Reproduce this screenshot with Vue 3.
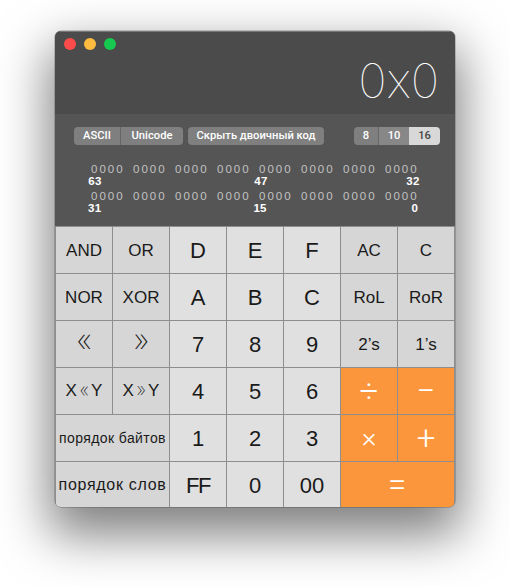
<script setup>
const keys = [
  { label: 'AND', kind: 'fn word' },
  { label: 'OR', kind: 'fn word' },
  { label: 'D', kind: 'digit' },
  { label: 'E', kind: 'digit' },
  { label: 'F', kind: 'digit' },
  { label: 'AC', kind: 'fn word' },
  { label: 'C', kind: 'fn word' },
  { label: 'NOR', kind: 'fn word' },
  { label: 'XOR', kind: 'fn word' },
  { label: 'A', kind: 'digit' },
  { label: 'B', kind: 'digit' },
  { label: 'C', kind: 'digit' },
  { label: 'RoL', kind: 'fn word' },
  { label: 'RoR', kind: 'fn word' },
  { label: '«', kind: 'fn shift' },
  { label: '»', kind: 'fn shift' },
  { label: '7', kind: 'digit' },
  { label: '8', kind: 'digit' },
  { label: '9', kind: 'digit' },
  { label: '2’s', kind: 'fn word' },
  { label: '1’s', kind: 'fn word' },
  { label: 'X', chev: '«', tail: 'Y', kind: 'fn word xy' },
  { label: 'X', chev: '»', tail: 'Y', kind: 'fn word xy' },
  { label: '4', kind: 'digit' },
  { label: '5', kind: 'digit' },
  { label: '6', kind: 'digit' },
  { label: '÷', kind: 'op' },
  { label: '−', kind: 'op' },
  { label: 'порядок байтов', kind: 'fn wide small' },
  { label: '1', kind: 'digit' },
  { label: '2', kind: 'digit' },
  { label: '3', kind: 'digit' },
  { label: '×', kind: 'op times' },
  { label: '+', kind: 'op' },
  { label: 'порядок слов', kind: 'fn wide' },
  { label: 'FF', kind: 'digit tight' },
  { label: '0', kind: 'digit' },
  { label: '00', kind: 'digit' },
  { label: '=', kind: 'op wide' }
]

const bitRows = [
  { left: '63', mid: '47', right: '32' },
  { left: '31', mid: '15', right: '0' }
]
</script>

<template>
  <div class="page">
    <div class="window">
      <div class="display">
        <div class="lights">
          <span class="light red"></span>
          <span class="light yellow"></span>
          <span class="light green"></span>
        </div>
        <div class="value">0x0</div>
      </div>

      <div class="panel">
        <div class="toolbar">
          <div class="seg">
            <span class="seg-item ascii">ASCII</span>
            <span class="seg-item unicode">Unicode</span>
          </div>
          <div class="seg">
            <span class="seg-item binary">Скрыть двоичный код</span>
          </div>
          <div class="seg base">
            <span class="seg-item b8">8</span>
            <span class="seg-item b10">10</span>
            <span class="seg-item b16 active">16</span>
          </div>
        </div>

        <div v-for="row in bitRows" :key="row.left" class="bit-row">
          <div class="bits">
            <span v-for="n in 8" :key="n" class="nibble">0000</span>
          </div>
          <div class="bit-labels">
            <span class="bit-left">{{ row.left }}</span>
            <span class="bit-mid">{{ row.mid }}</span>
            <span class="bit-right">{{ row.right }}</span>
          </div>
        </div>
      </div>

      <div class="keys">
        <div v-for="(key, i) in keys" :key="i" :class="['key', key.kind]">
          {{ key.label }}<template v-if="key.chev"><span class="chev">{{ key.chev }}</span>{{ key.tail }}</template>
        </div>
      </div>
    </div>
  </div>
</template>

<style>
body {
  margin: 0;
  background: #fff;
}
</style>

<style scoped>
.page {
  width: 510px;
  height: 587px;
  overflow: hidden;
  padding: 31px 0 0 55px;
  box-sizing: border-box;
  font-family: "Liberation Sans", Arial, sans-serif;
}

.window {
  width: 400px;
  height: 476px;
  border-radius: 6px;
  overflow: hidden;
  background: #8e8e8e;
  box-shadow: 0 22px 50px 6px rgba(0, 0, 0, 0.5), 0 0 0 0.5px rgba(0, 0, 0, 0.35);
  display: flex;
  flex-direction: column;
}

.display {
  flex: none;
  height: 83px;
  background: #4b4b4b;
  border-top: 1px solid #777;
  box-sizing: border-box;
  display: flex;
  justify-content: space-between;
  padding: 6px 16px 0 9px;
}

.lights {
  display: flex;
  gap: 8px;
}

.light {
  width: 12px;
  height: 12px;
  border-radius: 50%;
}

.red { background: #fc4b4b; }
.yellow { background: #fdbc40; }
.green { background: #16c94f; }

.value {
  font-family: Inter, Roboto, sans-serif;
  font-weight: 100;
  font-size: 48px;
  line-height: 49px;
  color: #fff;
  margin-top: 18px;
}

.panel {
  flex: none;
  height: 112px;
  background: #555;
  padding: 13px 0 0 19px;
  box-sizing: border-box;
}

.toolbar {
  display: flex;
  height: 18px;
  margin-bottom: 19px;
}

.seg {
  display: flex;
  border-radius: 4px;
  overflow: hidden;
  margin-right: 5px;
}

.seg.base {
  margin-left: 25px;
}

.seg-item {
  background: #7f7f7f;
  color: #fff;
  font-family: Roboto, sans-serif;
  font-size: 11.2px;
  font-weight: 500;
  line-height: 18px;
  text-align: center;
  box-sizing: border-box;
}

.ascii { width: 47px; border-right: 1px solid #666; }
.unicode { width: 62px; }
.binary { width: 136px; }
.b8 { width: 25px; border-right: 1px solid #666; }
.b10 { width: 30px; background: #878787; }
.b16 { width: 31px; }
.seg-item.active { background: #d8d8d8; color: #444; }

.bit-row {
  width: 332px;
  margin-left: 14px;
  margin-bottom: 3px;
}

.bits {
  display: flex;
  padding-left: 3px;
  height: 11px;
}

.nibble {
  width: 42px;
  flex: none;
  color: #c2c2c2;
  font-size: 11.5px;
  line-height: 11px;
  letter-spacing: 2px;
}

.bit-labels {
  display: flex;
  color: #fff;
  font-size: 11.5px;
  font-weight: 700;
  line-height: 13px;
  letter-spacing: 0.3px;
  text-align: center;
}

.bit-left { width: 14px; margin-right: 152px; }
.bit-mid { width: 14px; margin-right: 138px; }
.bit-right { width: 14px; }
.bit-row:last-child .bit-right { padding-left: 5px; }

.keys {
  flex: none;
  display: grid;
  grid-template-columns: repeat(7, 56px);
  grid-auto-rows: 46px;
  gap: 1px;
  padding: 0 0 0 1px;
  border-top: 1px solid #8e8e8e;
}

.key {
  display: flex;
  align-items: center;
  justify-content: center;
  color: #1a1a1a;
  white-space: nowrap;
}

.digit {
  background: #e0e0e0;
  font-size: 22px;
  padding-top: 2px;
  box-sizing: border-box;
}

.tight {
  letter-spacing: -1.5px;
}

.fn {
  background: #d6d6d6;
}

.word {
  font-size: 17px;
  padding-top: 2px;
  box-sizing: border-box;
}

.word.xy {
  padding-top: 0;
}

.chev {
  font-family: Roboto, sans-serif;
  font-weight: 100;
  font-size: 23px;
  margin: -4px 2px 0;
}

.shift {
  font-family: Roboto, sans-serif;
  font-weight: 100;
  font-size: 38px;
  padding-bottom: 11px;
  box-sizing: border-box;
}

.wide {
  grid-column: span 2;
  font-size: 16px;
  letter-spacing: 0.7px;
}

.small {
  font-size: 14px;
  letter-spacing: 0.4px;
}

.op {
  background: #fb963c;
  color: #fff;
  font-family: Roboto, sans-serif;
  font-weight: 300;
  font-size: 33px;
  padding-bottom: 2px;
  box-sizing: border-box;
}

.times {
  font-size: 28px;
}
</style>
